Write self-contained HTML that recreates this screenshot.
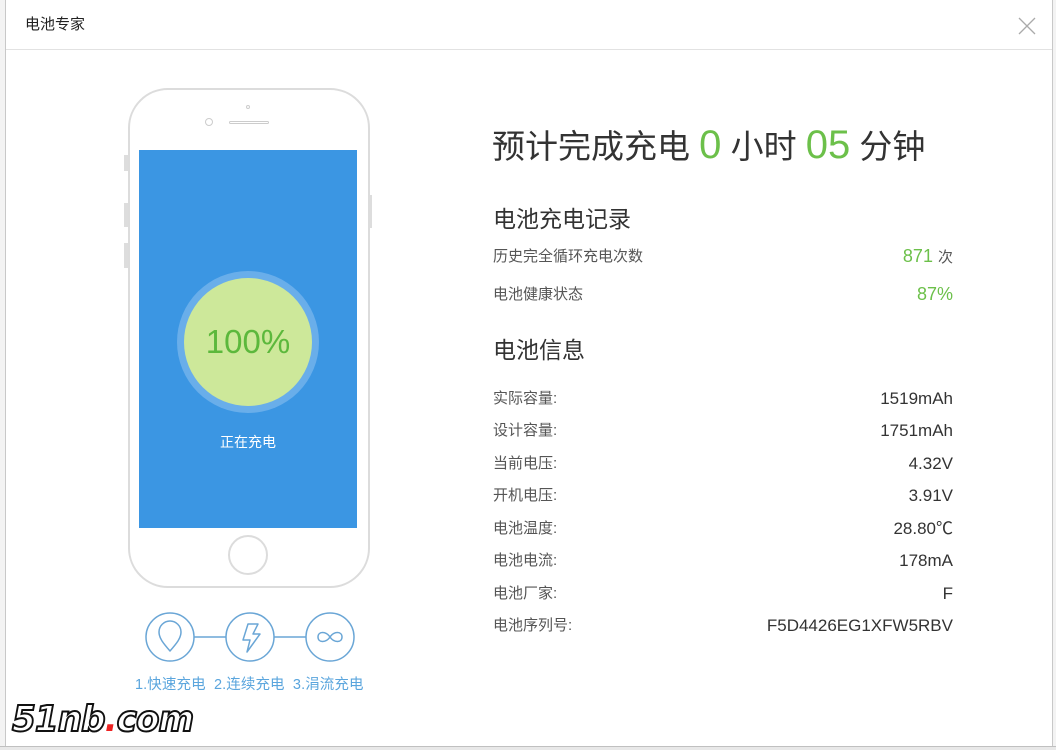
<!DOCTYPE html>
<html><head><meta charset="utf-8"><style>
*{margin:0;padding:0;box-sizing:border-box}
body{width:1056px;height:750px;background:#fff;position:relative;overflow:hidden;font-family:"Liberation Sans","Noto Sans CJK SC",sans-serif;color:#333}
.a{position:absolute;white-space:nowrap}
.lbl{left:493px;font-size:15px;color:#555;line-height:18px}
.val{right:103px;font-size:17px;color:#333;line-height:18px;text-align:right}
</style></head><body>
<div class="a" style="left:0;top:0;width:6px;height:750px;background:#f3f3f3;border-right:1px solid #c8c8c8"></div>
<div class="a" style="left:1052px;top:0;width:4px;height:750px;background:#f3f3f3;border-left:1px solid #c8c8c8"></div>
<div class="a" style="left:0;top:746px;width:1056px;height:4px;background:#e8e8e8;border-top:1px solid #c0c0c0"></div>
<div class="a" style="left:25px;top:15px;font-size:15px;line-height:20px;color:#222">电池专家</div>
<svg class="a" style="left:1018px;top:17px" width="18" height="18" stroke="#aaa" stroke-width="1.3"><path d="M1 1L17 17M17 1L1 17"/></svg>
<div class="a" style="left:6px;top:49px;width:1046px;height:1px;background:#e2e2e2"></div>

<!-- phone -->
<div class="a" style="left:124px;top:155px;width:4px;height:16px;background:#ddd"></div>
<div class="a" style="left:124px;top:203px;width:4px;height:24px;background:#ddd"></div>
<div class="a" style="left:124px;top:243px;width:4px;height:25px;background:#ddd"></div>
<div class="a" style="left:368px;top:195px;width:4px;height:33px;background:#ddd"></div>
<div class="a" style="left:128px;top:88px;width:242px;height:500px;border:2px solid #dcdcdc;border-radius:40px;background:#fff"></div>
<div class="a" style="left:246px;top:105px;width:4px;height:4px;border:1px solid #ccc;border-radius:50%"></div>
<div class="a" style="left:205px;top:118px;width:8px;height:8px;border:1px solid #ccc;border-radius:50%"></div>
<div class="a" style="left:229px;top:121px;width:40px;height:3px;border:1px solid #ccc;border-radius:2px"></div>
<div class="a" style="left:139px;top:150px;width:218px;height:378px;background:#3b96e3"></div>
<div class="a" style="left:177px;top:271px;width:142px;height:142px;border-radius:50%;background:#69aeea"></div>
<div class="a" style="left:184px;top:278px;width:128px;height:128px;border-radius:50%;background:#cde89a"></div>
<div class="a" style="left:184px;top:322px;width:128px;text-align:center;font-size:33px;line-height:40px;color:#5cb83c">100%</div>
<div class="a" style="left:139px;top:433px;width:218px;text-align:center;font-size:14px;line-height:18px;color:#fff">正在充电</div>
<div class="a" style="left:228px;top:535px;width:40px;height:40px;border:2px solid #dcdcdc;border-radius:50%"></div>

<!-- steps -->
<svg class="a" style="left:140px;top:607px" width="220" height="60" viewBox="140 607 220 60" fill="none" stroke="#6aa6d6" stroke-width="1.5" stroke-linejoin="round">
<circle cx="170" cy="637" r="24"/><circle cx="250" cy="637" r="24"/><circle cx="330" cy="637" r="24"/>
<line x1="194" y1="637" x2="226" y2="637"/><line x1="274" y1="637" x2="306" y2="637"/>
<path d="M170 651 C163 643 159 638 159 632 A11 11 0 0 1 181 632 C181 638 177 643 170 651 Z"/>
<path d="M248 624 L258 624 L253 634 L260 634 L247 652 L250 640 L243 640 Z"/>
<path d="M330 637 C326 631 318 631 318 637 C318 643 326 643 330 637 C334 631 342 631 342 637 C342 643 334 643 330 637 Z"/>
</svg>
<div class="a" style="left:135px;top:677px;font-size:14.5px;line-height:17px;color:#5aa5dd;letter-spacing:0.1px">1.快速充电&nbsp;&nbsp;2.连续充电&nbsp;&nbsp;3.涓流充电</div>

<div class="a" style="left:12px;top:698px;font-size:36px;line-height:44px;font-weight:bold;font-style:italic;color:#fff;-webkit-text-stroke:2px #111;letter-spacing:-1px;font-family:'DejaVu Sans',sans-serif;transform:scaleX(0.95);transform-origin:left">51nb<span style="color:#e22;-webkit-text-stroke:0">.</span>com</div>

<!-- right -->
<div class="a" style="left:492px;top:124px;font-size:33px;line-height:42px;color:#333">预计完成充电 <span style="color:#6cc04a;font-size:40px;font-weight:300">0</span> 小时 <span style="color:#6cc04a;font-size:40px;font-weight:300">05</span> 分钟</div>
<div class="a" style="left:493px;top:205px;font-size:23px;line-height:28px;color:#333">电池充电记录</div>
<div class="a lbl" style="top:248px">历史完全循环充电次数</div>
<div class="a val" style="top:247px;font-size:18px"><span style="color:#6cc04a">871</span> <span style="font-size:15px;color:#555">次</span></div>
<div class="a lbl" style="top:286px">电池健康状态</div>
<div class="a val" style="top:285px;font-size:18px;color:#6cc04a">87%</div>
<div class="a" style="left:493px;top:336px;font-size:23px;line-height:28px;color:#333">电池信息</div>
<div class="a lbl" style="top:390px">实际容量:</div><div class="a val" style="top:390px">1519mAh</div>
<div class="a lbl" style="top:422px">设计容量:</div><div class="a val" style="top:422px">1751mAh</div>
<div class="a lbl" style="top:455px">当前电压:</div><div class="a val" style="top:455px">4.32V</div>
<div class="a lbl" style="top:487px">开机电压:</div><div class="a val" style="top:487px">3.91V</div>
<div class="a lbl" style="top:520px">电池温度:</div><div class="a val" style="top:520px">28.80℃</div>
<div class="a lbl" style="top:552px">电池电流:</div><div class="a val" style="top:552px">178mA</div>
<div class="a lbl" style="top:585px">电池厂家:</div><div class="a val" style="top:585px">F</div>
<div class="a lbl" style="top:617px">电池序列号:</div><div class="a val" style="top:617px">F5D4426EG1XFW5RBV</div>
</body></html>
